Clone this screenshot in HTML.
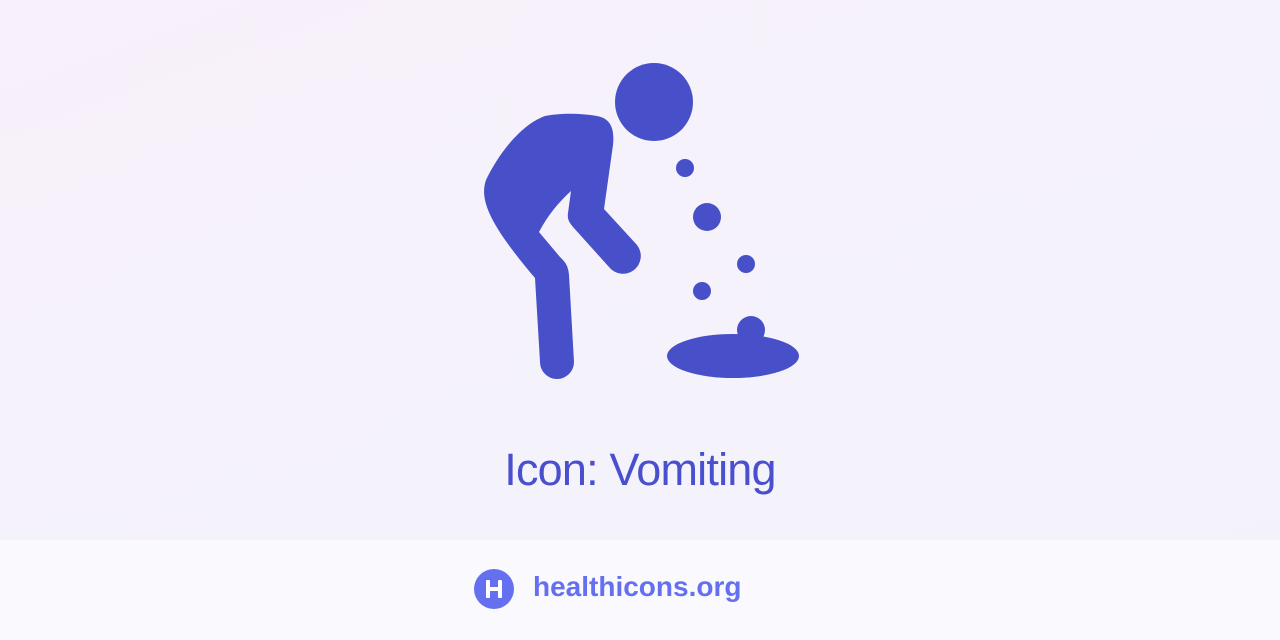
<!DOCTYPE html>
<html><head><meta charset="utf-8"><style>
html,body{margin:0;padding:0}
body{width:1280px;height:640px;position:relative;overflow:hidden;font-family:"Liberation Sans",sans-serif;
background:linear-gradient(160deg,#f8f0fa 0%,#f5f2fb 40%,#f3f2fb 100%);}
.title{position:absolute;left:0;width:1280px;top:444px;text-align:center;font-size:45px;color:#4a4fce;letter-spacing:-0.8px}
.foot{position:absolute;left:0;top:540px;width:1280px;height:100px;background:rgba(255,255,255,0.55)}
.brand{position:absolute;left:533px;top:571px;font-size:28px;font-weight:bold;color:#6470ef;letter-spacing:0px}
</style></head><body>
<svg width="1280" height="640" style="position:absolute;left:0;top:0">
<g fill="#4750c9">
<circle cx="654" cy="102" r="39"/>
<circle cx="685" cy="168" r="9"/>
<circle cx="707" cy="217" r="14"/>
<circle cx="746" cy="264" r="9"/>
<circle cx="702" cy="291" r="9"/>
<circle cx="751" cy="330" r="14"/>
<ellipse cx="733" cy="356" rx="66" ry="22"/>
<path d="M545,116 C520,125 498,155 486,180 C479,200 490,225 535,278 L540,362 A17,17 0 0 0 574,362 L569,275 C568,265 565,262 560,257 L539,232 C548,215 558,203 571,191 L568,213 C567,220 570,223 573,227 L609,267 A17,17 0 0 0 637,245 L604,209 L613,145 C615,125 608,118 597,116 C580,113 560,113 545,116 Z"/>
</g>
</svg>
<div class="title">Icon: Vomiting</div>
<div class="foot"></div>
<svg width="40" height="40" style="position:absolute;left:474px;top:569px">
<circle cx="20" cy="20" r="20" fill="#6470ef"/>
<rect x="12" y="11" width="4" height="18" rx="1" fill="#fff"/>
<rect x="24" y="11" width="4" height="18" rx="1" fill="#fff"/>
<rect x="14" y="18" width="12" height="4" fill="#fff"/>
</svg>
<div class="brand">healthicons.org</div>
</body></html>
